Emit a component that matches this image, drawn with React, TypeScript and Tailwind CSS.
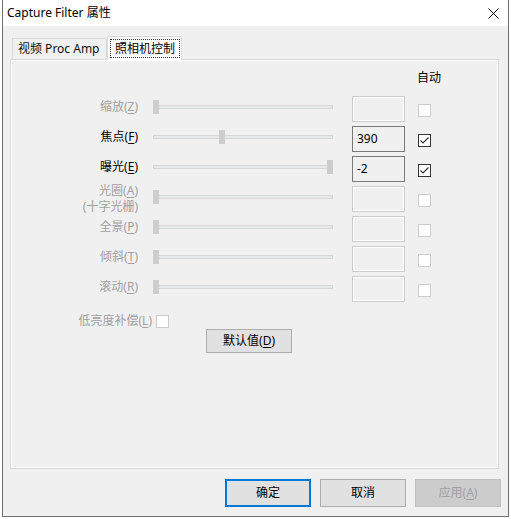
import React from 'react';

// Camera control property sheet (DirectShow style)
const ROWS = [
    { label: '缩放', key: 'Z', enabled: false, thumb: 0, value: '', checked: false },
    { label: '焦点', key: 'F', enabled: true, thumb: 66, value: '390', checked: true },
    { label: '曝光', key: 'E', enabled: true, thumb: 174, value: '-2', checked: true },
    { label: '光圈', key: 'A', enabled: false, thumb: 0, value: '', checked: false, sub: '(十字光栅)' },
    { label: '全景', key: 'P', enabled: false, thumb: 0, value: '', checked: false },
    { label: '倾斜', key: 'T', enabled: false, thumb: 0, value: '', checked: false },
    { label: '滚动', key: 'R', enabled: false, thumb: 0, value: '', checked: false },
];

const Mnemonic: React.FC<{ text: string; k: string }> = ({ text, k }) => (
    <span>
        {text}(<span className="underline underline-offset-2">{k}</span>)
    </span>
);

const CheckBox: React.FC<{ checked?: boolean; enabled?: boolean }> = ({ checked, enabled }) => (
    <div
        className={`w-[13px] h-[13px] bg-white border flex items-center justify-center ${
            enabled ? 'border-[#333333]' : 'border-[#cccccc]'
        }`}
    >
        {checked && (
            <svg width="11" height="11" viewBox="0 0 11 11">
                <path d="M1.5 5.5 L4 8 L9.5 2.5" fill="none" stroke="#333333" strokeWidth="1.2" />
            </svg>
        )}
    </div>
);

const Slider: React.FC<{ pos: number }> = ({ pos }) => (
    <div className="relative w-[180px] h-[14px]">
        <div className="absolute left-0 right-0 top-[5px] h-[4px] border border-[#d6d6d6] bg-[#e7eaea]" />
        <div className="absolute top-0 w-[6px] h-[14px] bg-[#cdcdcd]" style={{ left: pos }} />
    </div>
);

const App: React.FC = () => {
    return (
        <div className="w-[511px] h-[519px] bg-white font-['Noto_Sans','Noto_Sans_CJK_SC',sans-serif] text-[12px] leading-[16px] text-black">
            <div className="ml-[2px] w-[507px] h-[517px] border-x border-b border-[#6f6f6f] flex flex-col">
                {/* Title bar */}
                <div className="h-[26px] bg-white flex items-center justify-between pl-[4px] pr-[9px]">
                    <span>Capture Filter 属性</span>
                    <svg width="11" height="11" viewBox="0 0 11 11">
                        <path d="M0.5 0.5 L10.5 10.5 M10.5 0.5 L0.5 10.5" stroke="#000" strokeWidth="1" />
                    </svg>
                </div>

                <div className="flex-1 bg-[#f0f0f0] flex flex-col pt-[9px] px-[7px]">
                    {/* Tabs */}
                    <div className="flex items-end pl-[2px] h-[24px]">
                        <div className="w-[95px] h-[21px] border border-b-0 border-[#d9d9d9] bg-[#f0f0f0] flex items-center pl-[5px] text-[#111]">
                            视频 Proc Amp
                        </div>
                        <div className="relative z-10 w-[75px] h-[24px] -mb-[1px] border border-b-0 border-[#d9d9d9] bg-white flex items-start pt-[2px] pl-[2px]">
                            <div className="w-[70px] h-[19px] border border-dotted border-[#333] flex items-center justify-center">
                                照相机控制
                            </div>
                        </div>
                    </div>

                    {/* Tab page */}
                    <div className="w-[489px] h-[410px] border border-[#d9d9d9] shadow-[inset_0_0_0_1px_#ffffff] flex flex-col pt-[10px]">
                        <div className="flex">
                            <div className="w-[406px]" />
                            <span className="whitespace-nowrap">自动</span>
                        </div>

                        <div className="flex flex-col gap-[4px] mt-[10px]">
                            {ROWS.map((r) => (
                                <div key={r.key} className="flex h-[26px]">
                                    <div
                                        className={`w-[127px] text-right flex flex-col justify-center ${
                                            r.sub ? '' : '-mt-[4px]'
                                        } ${r.enabled ? 'text-black' : 'text-[#a0a0a0]'}`}
                                    >
                                        <Mnemonic text={r.label} k={r.key} />
                                        {r.sub && <span className="whitespace-nowrap">{r.sub}</span>}
                                    </div>
                                    <div className="ml-[15px] mt-[4px]">
                                        <Slider pos={r.thumb} />
                                    </div>
                                    <div
                                        className={`ml-[19px] w-[53px] h-[26px] border flex items-center pl-[4px] ${
                                            r.enabled
                                                ? 'border-[#7a7a7a]'
                                                : 'border-[#cccccc] shadow-[inset_0_0_0_1px_#ffffff]'
                                        }`}
                                    >
                                        {r.value}
                                    </div>
                                    <div className="ml-[13px] mt-[8px]">
                                        <CheckBox checked={r.checked} enabled={r.enabled} />
                                    </div>
                                </div>
                            ))}
                        </div>

                        {/* Low light compensation */}
                        <div className="flex items-center mt-[12px] h-[14px]">
                            <span className="w-[141px] text-right text-[#a0a0a0] whitespace-nowrap">
                                <Mnemonic text="低亮度补偿" k="L" />
                            </span>
                            <div className="ml-[4px]">
                                <CheckBox />
                            </div>
                        </div>

                        <div className="ml-[195px] mt-[1px]">
                            <button className="w-[86px] h-[24px] bg-[#e1e1e1] border border-[#adadad] flex items-center justify-center">
                                <Mnemonic text="默认值" k="D" />
                            </button>
                        </div>
                    </div>

                    {/* Dialog buttons */}
                    <div className="flex justify-end gap-[9px] mt-[10px] pr-[0px]">
                        <button className="w-[86px] h-[28px] bg-[#e1e1e1] border-2 border-[#0078d7] flex items-center justify-center">
                            确定
                        </button>
                        <button className="w-[86px] h-[28px] bg-[#e1e1e1] border border-[#adadad] flex items-center justify-center">
                            取消
                        </button>
                        <button className="w-[86px] h-[28px] bg-[#cccccc] border border-[#bfbfbf] text-[#a0a0a0] flex items-center justify-center">
                            <Mnemonic text="应用" k="A" />
                        </button>
                    </div>
                </div>
            </div>
        </div>
    );
};

export default App;
